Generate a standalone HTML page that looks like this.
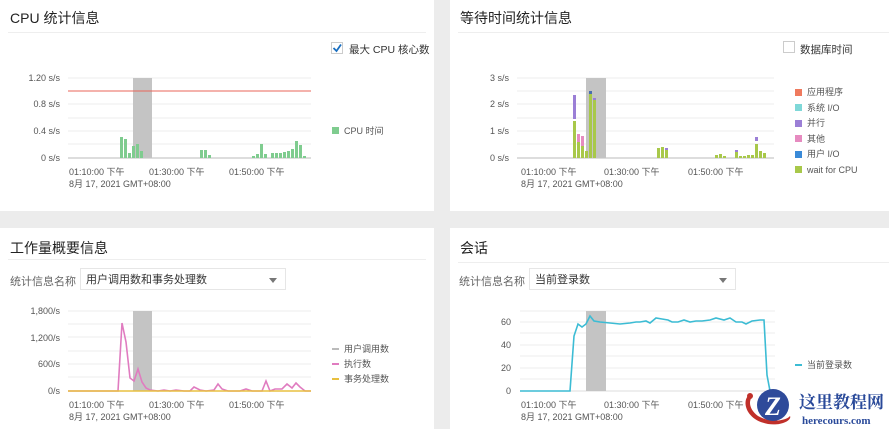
<!DOCTYPE html>
<html><head><meta charset="utf-8"><style>
body{margin:0;width:889px;height:429px;background:#ececec;position:relative;overflow:hidden;font-family:"Liberation Sans","Noto Sans CJK SC",sans-serif;color:#333}
.p{position:absolute;background:#fff}
.t{position:absolute;font-size:14px;color:#222}
.hr{position:absolute;height:1px;background:#eee}
.s{position:absolute;font-size:10px;color:#555;white-space:nowrap}
.sel{position:absolute;height:22px;border:1px solid #e6e6e6;background:#fff;font-size:11px;line-height:22px;padding-left:5px;box-sizing:border-box;color:#333}
.sel:after{content:"";position:absolute;right:8px;top:9px;border:4px solid transparent;border-top:5px solid #777}
svg{position:absolute;left:0;top:0}
</style></head><body>
<div class="p" style="left:0;top:0;width:434px;height:211px"></div>
<div class="p" style="left:450px;top:0;width:439px;height:211px"></div>
<div class="p" style="left:0;top:228px;width:434px;height:201px"></div>
<div class="p" style="left:450px;top:228px;width:439px;height:201px"></div>

<div class="t" style="left:10px;top:8px">CPU 统计信息</div>
<div class="hr" style="left:8px;top:32px;width:418px"></div>
<div class="t" style="left:460px;top:8px">等待时间统计信息</div>
<div class="hr" style="left:458px;top:32px;width:431px"></div>
<div class="t" style="left:10px;top:238px">工作量概要信息</div>
<div class="hr" style="left:8px;top:259px;width:418px"></div>
<div class="t" style="left:460px;top:238px">会话</div>
<div class="hr" style="left:458px;top:262px;width:431px"></div>

<div style="position:absolute;left:331px;top:42px;width:12px;height:12px;border:1px solid #ccc;box-sizing:border-box"></div>
<div class="s" style="left:349px;top:42px;font-size:10.5px;color:#333">最大 CPU 核心数</div>
<div style="position:absolute;left:783px;top:41px;width:12px;height:12px;border:1px solid #ccc;box-sizing:border-box"></div>
<div class="s" style="left:800px;top:42px;font-size:10.5px;color:#333">数据库时间</div>

<div class="s" style="left:10px;top:273px;font-size:11px;color:#666">统计信息名称</div>
<div class="sel" style="left:80px;top:268px;width:206px">用户调用数和事务处理数</div>
<div class="s" style="left:459px;top:273px;font-size:11px;color:#666">统计信息名称</div>
<div class="sel" style="left:529px;top:268px;width:207px">当前登录数</div>

<svg width="889" height="429" font-family="Liberation Sans,Noto Sans CJK SC,sans-serif" font-size="9" fill="#555">
<polyline points="333.5,48 336.5,51 341,44.5" fill="none" stroke="#1a6fc0" stroke-width="1.8"/>
<!-- chart1 -->
<g stroke="#eee"><line x1="68" x2="311" y1="78" y2="78"/><line x1="68" x2="311" y1="91" y2="91"/><line x1="68" x2="311" y1="104" y2="104"/><line x1="68" x2="311" y1="118" y2="118"/><line x1="68" x2="311" y1="131" y2="131"/><line x1="68" x2="311" y1="144" y2="144"/></g>
<line x1="68" x2="311" y1="158" y2="158" stroke="#bbb"/>
<rect x="133" y="78" width="19" height="80" fill="#c4c4c4"/>
<line x1="68" x2="311" y1="91" y2="91" stroke="#e8665a"/>
<g fill="#7fcc8f"><rect x="120" y="137" width="3" height="21"/><rect x="124" y="139" width="3" height="19"/><rect x="128" y="153" width="3" height="5"/><rect x="132" y="146" width="3" height="12"/><rect x="136" y="144" width="3" height="14"/><rect x="140" y="151" width="3" height="7"/><rect x="200" y="150" width="3" height="8"/><rect x="204" y="150" width="3" height="8"/><rect x="208" y="155" width="3" height="3"/><rect x="252" y="156" width="3" height="2"/><rect x="256" y="154" width="3" height="4"/><rect x="260" y="144" width="3" height="14"/><rect x="264" y="154" width="3" height="4"/><rect x="271" y="153" width="3" height="5"/><rect x="275" y="153" width="3" height="5"/><rect x="279" y="153" width="3" height="5"/><rect x="283" y="152" width="3" height="6"/><rect x="287" y="151" width="3" height="7"/><rect x="291" y="149" width="3" height="9"/><rect x="295" y="141" width="3" height="17"/><rect x="299" y="145" width="3" height="13"/><rect x="303" y="156" width="3" height="2"/></g>
<g text-anchor="end"><text x="60" y="81">1.20 s/s</text><text x="60" y="107">0.8 s/s</text><text x="60" y="134">0.4 s/s</text><text x="60" y="161">0 s/s</text></g>
<text x="69" y="175">01:10:00 下午</text><text x="149" y="175">01:30:00 下午</text><text x="229" y="175">01:50:00 下午</text><text x="69" y="187">8月 17, 2021 GMT+08:00</text>
<rect x="332" y="127" width="7" height="7" fill="#7fcc8f"/><text x="344" y="134">CPU 时间</text>

<!-- chart2 -->
<g stroke="#eee"><line x1="517" x2="774" y1="78" y2="78"/><line x1="517" x2="774" y1="91" y2="91"/><line x1="517" x2="774" y1="104" y2="104"/><line x1="517" x2="774" y1="118" y2="118"/><line x1="517" x2="774" y1="131" y2="131"/><line x1="517" x2="774" y1="144" y2="144"/></g>
<line x1="517" x2="774" y1="158" y2="158" stroke="#bbb"/>
<rect x="586" y="78" width="20" height="80" fill="#c4c4c4"/>
<g fill="#a8c84a"><rect x="573" y="121" width="3" height="37"/><rect x="577" y="142" width="3" height="16"/><rect x="581" y="146" width="3" height="12"/><rect x="585" y="151" width="3" height="7"/><rect x="589" y="94" width="3" height="64"/><rect x="593" y="100" width="3" height="58"/><rect x="657" y="148" width="3" height="10"/><rect x="661" y="147" width="3" height="11"/><rect x="665" y="150" width="3" height="8"/><rect x="715" y="155" width="3" height="3"/><rect x="719" y="154" width="3" height="4"/><rect x="723" y="156" width="3" height="2"/><rect x="735" y="152" width="3" height="6"/><rect x="739" y="156" width="3" height="2"/><rect x="743" y="156" width="3" height="2"/><rect x="747" y="155" width="3" height="3"/><rect x="751" y="155" width="3" height="3"/><rect x="755" y="144" width="3" height="14"/><rect x="759" y="151" width="3" height="7"/><rect x="763" y="153" width="3" height="5"/></g>
<rect x="573" y="95" width="3" height="24" fill="#9b7fd6"/><rect x="577" y="134" width="3" height="8" fill="#e68bc0"/><rect x="581" y="136" width="3" height="10" fill="#e68bc0"/><rect x="589" y="91" width="3" height="3" fill="#4a6fb0"/><rect x="593" y="98" width="3" height="2" fill="#9b7fd6"/><rect x="665" y="148" width="3" height="2" fill="#9b7fd6"/><rect x="755" y="137" width="3" height="4" fill="#9b7fd6"/><rect x="735" y="150" width="3" height="2" fill="#9b7fd6"/>
<g text-anchor="end"><text x="509" y="81">3 s/s</text><text x="509" y="107">2 s/s</text><text x="509" y="134">1 s/s</text><text x="509" y="161">0 s/s</text></g>
<text x="521" y="175">01:10:00 下午</text><text x="604" y="175">01:30:00 下午</text><text x="688" y="175">01:50:00 下午</text><text x="521" y="187">8月 17, 2021 GMT+08:00</text>
<rect x="795" y="89" width="7" height="7" fill="#ef7a5e"/><text x="807" y="95">应用程序</text>
<rect x="795" y="104" width="7" height="7" fill="#7fd8d8"/><text x="807" y="111">系统 I/O</text>
<rect x="795" y="120" width="7" height="7" fill="#9b7fd6"/><text x="807" y="126">并行</text>
<rect x="795" y="135" width="7" height="7" fill="#e68bc0"/><text x="807" y="142">其他</text>
<rect x="795" y="151" width="7" height="7" fill="#3a8ad8"/><text x="807" y="157">用户 I/O</text>
<rect x="795" y="166" width="7" height="7" fill="#a8c84a"/><text x="807" y="173">wait for CPU</text>

<!-- chart3 -->
<g stroke="#eee"><line x1="68" x2="311" y1="311" y2="311"/><line x1="68" x2="311" y1="324" y2="324"/><line x1="68" x2="311" y1="337" y2="337"/><line x1="68" x2="311" y1="351" y2="351"/><line x1="68" x2="311" y1="364" y2="364"/><line x1="68" x2="311" y1="377" y2="377"/></g>
<line x1="68" x2="311" y1="391" y2="391" stroke="#ddd"/>
<rect x="133" y="311" width="19" height="80" fill="#c4c4c4"/>
<polyline fill="none" stroke="#e07cc0" stroke-width="1.6" points="68,391 118,391 122,323 126,342 130,378 134,381 138,369 142,382 146,388 150,390 158,391 164,390 170,391 176,390 184,391 190,391 194,387 200,390 206,391 214,390 218,384 222,389 228,391 240,391 246,389 252,391 262,391 266,381 270,391 275,389 282,389 287,384 292,388 296,383 300,387 305,391 311,391"/>
<line x1="68" x2="311" y1="391" y2="391" stroke="#e8c040" stroke-width="1.5"/>
<g text-anchor="end"><text x="60" y="314">1,800/s</text><text x="60" y="341">1,200/s</text><text x="60" y="367">600/s</text><text x="60" y="394">0/s</text></g>
<text x="69" y="408">01:10:00 下午</text><text x="149" y="408">01:30:00 下午</text><text x="229" y="408">01:50:00 下午</text><text x="69" y="420">8月 17, 2021 GMT+08:00</text>
<line x1="332" x2="339" y1="349" y2="349" stroke="#bbb" stroke-width="2"/><text x="344" y="352">用户调用数</text>
<line x1="332" x2="339" y1="364" y2="364" stroke="#e07cc0" stroke-width="2"/><text x="344" y="367">执行数</text>
<line x1="332" x2="339" y1="379" y2="379" stroke="#e8c040" stroke-width="2"/><text x="344" y="382">事务处理数</text>

<!-- chart4 -->
<g stroke="#eee"><line x1="520" x2="775" y1="311" y2="311"/><line x1="520" x2="775" y1="322" y2="322"/><line x1="520" x2="775" y1="333" y2="333"/><line x1="520" x2="775" y1="345" y2="345"/><line x1="520" x2="775" y1="356" y2="356"/><line x1="520" x2="775" y1="368" y2="368"/><line x1="520" x2="775" y1="379" y2="379"/></g>
<line x1="520" x2="775" y1="391" y2="391" stroke="#ddd"/>
<rect x="586" y="311" width="20" height="80" fill="#c4c4c4"/>
<polyline fill="none" stroke="#3cbcd4" stroke-width="1.6" points="520,391 570,391 574,336 578,324 582,327 586,324 590,316 594,321 600,322 610,323 620,324 630,323 636,322 640,322 646,321 650,323 656,318 662,319 668,320 672,322 678,322 684,320 690,322 696,321 702,321 710,320 716,318 724,320 730,318 736,322 742,322 746,324 752,321 760,320 764,320 767,375 770,391"/>
<g text-anchor="end"><text x="511" y="325">60</text><text x="511" y="348">40</text><text x="511" y="371">20</text><text x="511" y="394">0</text></g>
<text x="521" y="408">01:10:00 下午</text><text x="604" y="408">01:30:00 下午</text><text x="688" y="408">01:50:00 下午</text><text x="521" y="420">8月 17, 2021 GMT+08:00</text>
<line x1="795" x2="802" y1="365" y2="365" stroke="#3cbcd4" stroke-width="2"/><text x="807" y="368">当前登录数</text>

<!-- watermark -->
<path d="M748,396 C742,402 746,420 768,424 C782,426 792,420 790,416 C786,421 770,423 758,416 C750,410 748,402 752,397Z" fill="#c0302a"/>
<circle cx="750" cy="396" r="3" fill="#c0302a"/>
<circle cx="773" cy="405" r="16" fill="#2e4a9a"/>
<text x="773" y="415" text-anchor="middle" font-size="26" font-weight="bold" fill="#fff" font-family="Liberation Serif,serif" font-style="italic">Z</text>
<text x="799" y="408" font-size="17" font-weight="bold" fill="#2a4a9a" font-family="Liberation Serif,Noto Serif CJK SC,serif">这里教程网</text>
<text x="802" y="424" font-size="11" font-weight="bold" fill="#2a4a9a" font-family="Liberation Serif,serif">herecours.com</text>
</svg>
</body></html>
